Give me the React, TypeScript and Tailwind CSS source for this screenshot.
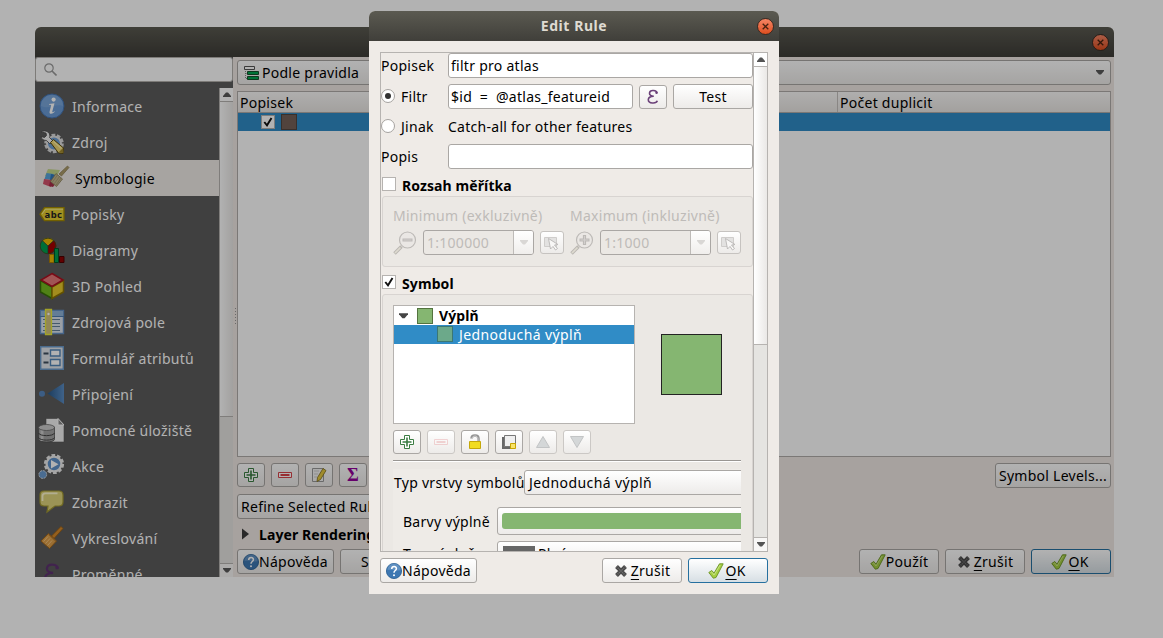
import type { ReactNode } from "react";
import clsx from "clsx";

type IconProps = { className?: string };

function InfoIcon() {
    return (
        <svg width="26" height="26" viewBox="0 0 26 26">
            <circle cx="13" cy="13" r="12" fill="#6a9bd6" stroke="#4574b0" />
            <path d="M2 13a11 11 0 0 1 22 0c-6-3-14 4-22 0z" fill="#8fb4e0" opacity=".45" />
            <circle cx="14.6" cy="6.6" r="2.1" fill="#fff" />
            <path d="M10 11l5.5-.8-2.2 8.3c-.2 1 .8.8 2-.3l.5.6c-2.2 2.5-6 2.9-5.2-.4l1.5-5.8c.2-.8-.6-.9-2.1-.8z" fill="#fff" />
        </svg>
    );
}

function ToolsIcon() {
    return (
        <svg width="26" height="26" viewBox="0 0 26 26">
            <circle cx="15" cy="14.500" r="8.2" fill="none" stroke="#d8d8d8" strokeWidth="3.2" strokeDasharray="3.6 1.55" />
            <circle cx="15" cy="14.500" r="7" fill="#6f9fd4" stroke="#e0e0e0" strokeWidth="2" />
            <path d="M2 3c2-1.500 5.500-1.500 7.500.5 1.500 1.500 1.600 3.500 1 5l3.500 3.500-3 3-3.500-3.500c-2.500 0-5-1-5.500-4l3.500 1 2-2-.5-2.500z" fill="#f4f4f4" stroke="#444" strokeWidth=".8" />
            <path d="M11.500 13.500l3-3 10 8.500-.5 5.500-4.500-.5z" fill="#efd774" stroke="#5a4a10" />
            <path d="M14.500 12.500l8 7" stroke="#fff2a8" strokeWidth="1.200" />
            <path d="M19.500 23.500l4.500-4.500.5 5z" fill="#a08830" />
        </svg>
    );
}

function SymbologyIcon() {
    return (
        <svg width="28" height="26" viewBox="0 0 28 26">
            <path d="M6 4l12 1-4 8-11-2z" fill="#c5d78c" />
            <path d="M4.500 8l7 1-2 6-7-1z" fill="#58a5dd" />
            <path d="M9 9l5 1-2 6-4-1z" fill="#3179be" />
            <path d="M2 14l8 1-1 7-8-3z" fill="#d3516a" />
            <path d="M8 16l6 2-3 4-4-1z" fill="#a92d48" />
            <path d="M25.500 1l1.500 1.500-7.500 8.500-2.500-2z" fill="#ad9c69" stroke="#8b7b50" strokeWidth=".7" />
            <path d="M14 8.500l6.500 5.500-6 7.500-6-5z" fill="#c3b78f" stroke="#8c8058" strokeWidth=".8" />
            <path d="M15.500 10l-5 7M17.500 11.500l-5 7M19 13l-5 7" stroke="#988c65" strokeWidth=".6" />
        </svg>
    );
}

function LabelsIcon() {
    return (
        <svg width="26" height="26" viewBox="0 0 26 26">
            <path d="M1 13.200l4.500-6.500H25v13H5.500z" fill="#e5cf31" stroke="#a58b00" strokeWidth="1.300" />
            <path d="M3 13l3.500-4.800H24" stroke="#f8ef95" fill="none" />
            <text x="5.500" y="16.500" fontSize="9.500" fontWeight="700" fontFamily="Noto Sans, sans-serif" letterSpacing="0" fill="#222" textLength="17.500">abc</text>
        </svg>
    );
}

function DiagramsIcon() {
    return (
        <svg width="26" height="26" viewBox="0 0 26 26">
            <circle cx="9" cy="9" r="7.800" fill="#00a050" />
            <path d="M9 9L3 3.500a8 8 0 0 1 12 0z" fill="#eebb00" />
            <path d="M9 9l6-5.500a8 8 0 0 1-6 13.500z" fill="#a50000" />
            <path d="M9 17V9L3.300 3.500M9 9l5.700-5.500" stroke="#333" strokeWidth=".7" fill="none" />
            <circle cx="9" cy="9" r="7.800" fill="none" stroke="#3a4a20" strokeWidth=".8" />
            <path d="M10.500 17.500h4.500v8h-4.500z" fill="#eebb00" stroke="#b07d00" />
            <path d="M15.500 11.500h4v14h-4z" fill="#00a050" stroke="#00552a" />
            <path d="M20.500 19.500h4.500v6h-4.500z" fill="#8d0000" stroke="#4d0000" />
        </svg>
    );
}

function CubeIcon() {
    return (
        <svg width="26" height="28" viewBox="0 0 26 28">
            <path d="M1.500 8.500L13 15v11.500L1.500 20z" fill="#73ba20" stroke="#38700a" strokeWidth="1.500" />
            <path d="M24.500 8.500L13 15v11.500L24.500 20z" fill="#e8c92c" stroke="#8e7400" strokeWidth="1.500" />
            <path d="M13 1.500L24 8l-11 6.500L2 8z" fill="#e67979" stroke="#ad1020" strokeWidth="1.500" />
        </svg>
    );
}

function FieldsIcon() {
    return (
        <svg width="26" height="28" viewBox="0 0 26 28">
            <path d="M1.500 2.500h23v23h-23z" fill="#dce4ee" stroke="#6490c4" strokeWidth="1.400" />
            <path d="M2 3h22v5H2z" fill="#8fb4d8" />
            <path d="M1 8.500h24" stroke="#4c7bb0" />
            <path d="M4 11.500h17M4 15.500h17M4 18.500h17M4 22.500h17" stroke="#64809c" />
            <path d="M6.500 1.500h6v25h-6z" fill="#d2c27b" stroke="#eaea3a" strokeWidth="1.300" />
            <circle cx="9.500" cy="6" r="1.200" fill="#fff" />
        </svg>
    );
}

function FormIcon() {
    return (
        <svg width="26" height="26" viewBox="0 0 26 26">
            <path d="M1.700 1.700h22.600v22.600H1.700z" fill="#e2e7ec" stroke="#6b9aca" strokeWidth="1.400" />
            <path d="M11.500 5h9.500v6h-9.500zM11.500 14.500h9.500v6h-9.500z" fill="#fff" stroke="#5486b8" strokeWidth="1.400" />
            <path d="M4.500 8.500h5M4.500 17.500h5" stroke="#3f4f5f" strokeWidth="2" />
        </svg>
    );
}

function JoinIcon() {
    return (
        <svg width="26" height="26" viewBox="0 0 26 26">
            <defs>
                <linearGradient id="join">
                    <stop stopColor="#285888" />
                    <stop offset="1" stopColor="#5b8dc4" />
                </linearGradient>
            </defs>
            <circle cx="3" cy="12.700" r="3" fill="#5786bd" />
            <path d="M8.500 12.500L25 2v21z" fill="url(#join)" />
        </svg>
    );
}

function StorageIcon() {
    return (
        <svg width="27" height="27" viewBox="0 0 27 27">
            <path d="M8 1.500h12l6 6V25H8z" fill="#f2f2f2" stroke="#555" strokeWidth=".6" />
            <path d="M20 1.500V8h6z" fill="#888" stroke="#fff" />
            <ellipse cx="8.500" cy="22.500" rx="8" ry="3" fill="#555" />
            <path d="M.5 10v12c0 4 16 4 16 0V10z" fill="#a2a2a2" stroke="#555" strokeWidth=".8" />
            <path d="M4 12v12" stroke="#ccc" strokeWidth="3" />
            <path d="M.5 16c1 3.500 15 3.500 16 0M.5 20.500c1 3.500 15 3.500 16 0" fill="none" stroke="#444" />
            <ellipse cx="8.500" cy="10.500" rx="8" ry="3" fill="#cacaca" stroke="#666" strokeWidth=".8" />
        </svg>
    );
}

function ActionsIcon() {
    return (
        <svg width="27" height="27" viewBox="0 0 27 27">
            <circle cx="16" cy="11" r="8.500" fill="none" stroke="#ededed" strokeWidth="3.200" strokeDasharray="3.500 1.840" />
            <circle cx="16" cy="11" r="7.400" fill="#5f91c9" stroke="#ededed" strokeWidth="2.300" />
            <path d="M13 7l7.500 4.200-7.500 4.200z" fill="#fff" />
            <circle cx="4.800" cy="21.500" r="3.900" fill="#6a9bd0" stroke="#ddd" strokeDasharray="2 1" />
        </svg>
    );
}

function DisplayIcon() {
    return (
        <svg width="26" height="26" viewBox="0 0 26 26">
            <path d="M5 2h15q4 0 4 4v7q0 4-4 4h-4l-8 6 1-6H5q-4 0-4-4V6q0-4 4-4z" fill="#ded47c" stroke="#a39932" strokeWidth="1.200" />
            <path d="M3.500 12V7q0-2.700 3-2.700h12" stroke="#fff9d0" fill="none" strokeWidth="1.800" />
        </svg>
    );
}

function RenderingIcon() {
    return (
        <svg width="26" height="26" viewBox="0 0 26 26">
            <path d="M22 1.500l2 2-9 10-2.500-2.500z" fill="#d5892c" stroke="#9b5c0b" strokeWidth=".8" />
            <path d="M9.500 8.500l8 7.500-7 7.500-8.500-7.500z" fill="#dfa04a" stroke="#a4661a" />
            <path d="M9 11.500l-4.500 5M11 13.500l-4.500 5M13 15.500l-4.500 5" stroke="#f6c581" />
            <path d="M9.500 9.500l7.500 7" stroke="#b87a2c" />
        </svg>
    );
}

function EpsilonIcon({ className }: IconProps) {
    return (
        <svg className={className} width="16" height="18" viewBox="0 0 16 18">
            <path
                d="M12 5.200C11.800 2 5 1.200 4.500 5c-.2 2 1.700 3.200 4.300 3.200C5 8.200 3.300 9.800 3.300 11.700c0 4.100 8 4.200 9 1.100"
                fill="none"
                stroke="currentColor"
                strokeWidth="1.600"
            />
            <circle cx="11.500" cy="4.700" r="1.200" fill="currentColor" />
        </svg>
    );
}

function PlusIcon() {
    return (
        <svg width="16" height="16" viewBox="0 0 16 16">
            <path d="M5.500 1.500h5v4h4v5h-4v4h-5v-4h-4v-5h4z" fill="#fff" stroke="#3b7d43" />
            <path d="M8 3.500v9M3.500 8h9" stroke="#3b7d43" strokeWidth="1.600" />
        </svg>
    );
}

function MinusIcon() {
    return (
        <svg width="16" height="16" viewBox="0 0 16 16">
            <path d="M1.500 5.500h13v5h-13z" fill="#fff" stroke="#d8444a" />
            <path d="M3.500 8h9" stroke="#d8444a" strokeWidth="2" />
        </svg>
    );
}

function EditIcon() {
    return (
        <svg width="16" height="16" viewBox="0 0 16 16">
            <path d="M1.500 1.500h11v13h-11z" fill="#f4f4f4" stroke="#999" />
            <path d="M3 4h5M3 7h4M3 10h3" stroke="#ccc" />
            <path d="M6.500 10.500L12 1.500l3 2-5.500 9-3.500 2z" fill="#e4c83e" stroke="#7d6b1c" strokeWidth=".8" />
        </svg>
    );
}

function LockIcon() {
    return (
        <svg width="16" height="16" viewBox="0 0 16 16">
            <path d="M4.500 4.500C4.500.5 11.500.5 11.500 4.500v3" fill="none" stroke="#929292" strokeWidth="2.500" />
            <path d="M5 4.200C5.500 1.500 10.500 1 11 4.500v3" fill="none" stroke="#ddd" strokeWidth=".8" />
            <path d="M2.500 7.500h11v7h-11z" fill="#f2dc20" stroke="#c5a80a" />
        </svg>
    );
}

function DuplicateIcon() {
    return (
        <svg width="16" height="16" viewBox="0 0 16 16">
            <path d="M1 3h11v12H1z" fill="#686868" />
            <path d="M3.500 1.500h11v11h-11z" fill="#efefef" stroke="#777" />
            <path d="M9.500 9.500h5v5h-5z" fill="#f8e36a" stroke="#c8a400" />
        </svg>
    );
}

function TriangleIcon({ down }: { down?: boolean }) {
    return (
        <svg width="16" height="16" viewBox="0 0 16 16" className={clsx(down && "rotate-180")}>
            <path d="M8 2.500l6.500 11h-13z" fill="#d4d7d8" stroke="#c2c4c5" />
        </svg>
    );
}

function ZoomIcon({ plus }: { plus?: boolean }) {
    return (
        <svg width="24" height="24" viewBox="0 0 24 24" className="shrink-0">
            <path d="M1.500 22.500l7-7" stroke="#bab7b2" strokeWidth="3.500" />
            <path d="M2 22l5.500-5.500" stroke="#dedbd0" strokeWidth="1.700" />
            <circle cx="14.500" cy="9" r="8" fill="#eae7e4" stroke="#bdbab7" strokeWidth="1.200" />
            <path d={plus ? "M9.500 9h10M14.500 4v10" : "M9.500 9h10"} stroke="#bdbab7" strokeWidth="3.200" />
            <path d={plus ? "M10.500 9h8M14.500 5v8" : "M10.500 9h8"} stroke="#d3d0ce" strokeWidth="1" />
        </svg>
    );
}

function CanvasIcon() {
    return (
        <svg width="16" height="16" viewBox="0 0 16 16">
            <path d="M.5 2.500h12v9H.5z" fill="#e3e2e1" stroke="#cfcdcb" />
            <path d="M4.500 3.500l9.500 6-3.500.5 3 3.500-2 1.500-2.500-3.500-2.500 2.500z" fill="#f8f7f6" stroke="#b8b6b4" strokeWidth=".9" />
        </svg>
    );
}

function HelpIcon() {
    return (
        <svg width="16" height="16" viewBox="0 0 16 16" className="shrink-0">
            <circle cx="8" cy="8" r="7.600" fill="#3d77b2" stroke="#255a91" strokeWidth=".8" />
            <path d="M1.500 7a6.500 6.500 0 0 1 13 0c-4 1.500-8-1-13 0z" fill="#77a1cd" opacity=".6" />
            <path d="M5.700 6c.1-3.300 4.900-3.200 4.700-.3C10.300 7.600 8 7.500 8 9.800" fill="none" stroke="#fff" strokeWidth="1.500" />
            <circle cx="8" cy="12.300" r="1" fill="#fff" />
        </svg>
    );
}

function CheckIcon() {
    return (
        <svg width="16" height="16" viewBox="0 0 16 16" className="shrink-0">
            <path d="M.8 9.500l3-2 2.200 2.700L11.500.8h3.700L8 14.500l-2.700.7z" fill="#a5ce43" stroke="#6b9324" strokeWidth=".9" />
            <path d="M2.500 9.600l1.200-.7L6 12 12.200 2" fill="none" stroke="#d0e897" strokeWidth=".8" />
        </svg>
    );
}

function CrossIcon() {
    return (
        <svg width="14" height="14" viewBox="0 0 14 14" className="shrink-0">
            <path d="M2.500 2.500l9 9M11.500 2.500l-9 9" stroke="#494949" strokeWidth="4" />
            <path d="M2.500 2.500l9 9M11.500 2.500l-9 9" stroke="#727272" strokeWidth="1.500" strokeDasharray="1 1" />
        </svg>
    );
}

function RulesIcon() {
    return (
        <svg width="16" height="16" viewBox="0 0 16 16" className="shrink-0">
            <path d="M1.500 4v9.500h3M1.500 8.500h3" stroke="#888" fill="none" strokeDasharray="1 1" />
            <path d="M.5 1.500h10v3H.5z" fill="#fff" stroke="#555" />
            <path d="M3.500 6.500h11v3h-11zM3.500 11.500h11v3h-11z" fill="#00a550" stroke="#174f2c" />
        </svg>
    );
}

function Arrow({ className }: IconProps) {
    return (
        <svg width="8" height="5" viewBox="0 0 8 5" className={clsx("shrink-0", className)}>
            <path d="M0 0h8v1L5 4.500H3L0 1z" fill="currentColor" />
        </svg>
    );
}

function Tick({ checked }: { checked?: boolean }) {
    return (
        <span className="flex size-3.5 shrink-0 items-center justify-center border border-[#b6b3b0] bg-white">
            {checked && (
                <svg width="10" height="10" viewBox="0 0 10 10">
                    <path d="M1.300 5L4 8.300 8.500 1" fill="none" stroke="#111" strokeWidth="1.900" />
                </svg>
            )}
        </span>
    );
}

function Radio({ checked }: { checked?: boolean }) {
    return (
        <span className="mb-0.5 flex size-3.5 shrink-0 items-center justify-center rounded-full border border-[#a5a29f] bg-white">
            {checked && <span className="size-1.5 rounded-full bg-[#333]" />}
        </span>
    );
}

function Button({ className, children }: { className?: string; children?: ReactNode }) {
    return (
        <div
            className={clsx(
                "flex shrink-0 items-center justify-center rounded-[3px] border bg-linear-to-b from-white to-[#edebe9] whitespace-nowrap",
                className,
            )}
        >
            {children}
        </div>
    );
}

function ToolButton({ disabled, children }: { disabled?: boolean; children: ReactNode }) {
    return (
        <Button className={clsx("h-6 w-7", disabled ? "border-[#cbc8c5]" : "border-[#aaa7a4]")}>{children}</Button>
    );
}

function CloseButton() {
    return (
        <div className="flex size-[17px] items-center justify-center rounded-full border border-[#3a2a22] bg-linear-to-b from-[#f58563] to-[#dd4d1b]">
            <svg width="7" height="7" viewBox="0 0 7 7">
                <path d="M.7.7l5.600 5.600M6.300.7L.7 6.300" stroke="#46210f" strokeWidth="1.300" />
            </svg>
        </div>
    );
}

const NAV = [
    { label: "Informace", icon: <InfoIcon /> },
    { label: "Zdroj", icon: <ToolsIcon /> },
    { label: "Symbologie", icon: <SymbologyIcon /> },
    { label: "Popisky", icon: <LabelsIcon /> },
    { label: "Diagramy", icon: <DiagramsIcon /> },
    { label: "3D Pohled", icon: <CubeIcon /> },
    { label: "Zdrojová pole", icon: <FieldsIcon /> },
    { label: "Formulář atributů", icon: <FormIcon /> },
    { label: "Připojení", icon: <JoinIcon /> },
    { label: "Pomocné úložiště", icon: <StorageIcon /> },
    { label: "Akce", icon: <ActionsIcon /> },
    { label: "Zobrazit", icon: <DisplayIcon /> },
    { label: "Vykreslování", icon: <RenderingIcon /> },
    { label: "Proměnné", icon: <EpsilonIcon className="h-[26px] w-[24px] text-[#5e3370]" /> },
];

function Sidebar() {
    return (
        <div className="flex w-[198px] shrink-0 flex-col bg-[#5c5c5c]">
            <div className="flex h-[25px] shrink-0 items-center rounded-[3px] border border-[#b3b0ad] bg-white pl-2">
                <svg width="13" height="13" viewBox="0 0 13 13">
                    <circle cx="5" cy="5" r="4.200" fill="none" stroke="#9a9a9a" strokeWidth="1.200" />
                    <path d="M8 8l4.500 4.500" stroke="#9a9a9a" strokeWidth="1.600" />
                </svg>
            </div>
            <div className="mt-1.5 flex min-h-0 flex-1">
                <div className="w-[184px] overflow-hidden">
                    {NAV.map((item) => {
                        const active = item.label === "Symbologie";
                        return (
                            <div
                                key={item.label}
                                className={clsx(
                                    "flex h-9 items-center pl-[3px] whitespace-nowrap",
                                    active ? "bg-[#efebe7] text-black" : "text-white",
                                )}
                            >
                                <span className={clsx("flex shrink-0 justify-center", active ? "w-[35px]" : "w-[27px]")}>
                                    {item.icon}
                                </span>
                                <span className={clsx("pt-0.5", active ? "ml-0.5" : "ml-[7px]")}>{item.label}</span>
                            </div>
                        );
                    })}
                </div>
                <div className="flex w-3.5 flex-col border-l border-[#b6b3b0] bg-[#e5e4e1]">
                    <div className="flex h-3.5 items-center justify-center border-b border-[#b6b3b0] bg-white text-[#5a5a5a]">
                        <Arrow className="rotate-180" />
                    </div>
                    <div className="h-[315px] border-b border-[#b6b3b0] bg-linear-to-r from-white to-[#e9e7e5]" />
                    <div className="mt-auto flex h-3.5 items-center justify-center border-t border-[#b6b3b0] bg-[#f6f5f4] text-[#5a5a5a]">
                        <Arrow />
                    </div>
                </div>
            </div>
        </div>
    );
}

function PropertiesWindow() {
    return (
        <div className="flex h-[550px] w-[1079px] flex-col overflow-hidden rounded-t-md bg-[#efe9e4]">
            <div className="flex h-[30px] shrink-0 items-center justify-end bg-linear-to-b from-[#5b5a51] to-[#3e3d38] pr-[5px]">
                <CloseButton />
            </div>
            <div className="flex min-h-0 flex-1">
                <Sidebar />
                <div className="flex w-1 shrink-0 flex-col items-end justify-center gap-[2px] pb-0.5">
                    {[0, 1, 2, 3, 4, 5].map((dot) => (
                        <span key={dot} className="mr-px size-px bg-[#999]" />
                    ))}
                </div>
                <div className="flex min-w-0 flex-1 flex-col pt-[3px] pr-[3px] pb-[3px]">
                    <Button className="h-[25px] w-full justify-start! border-[#aaa7a4] px-1.5">
                        <RulesIcon />
                        <span className="ml-0.5 flex-1">Podle pravidla</span>
                        <Arrow className="text-[#5a5a5a]" />
                    </Button>
                    <div className="mt-1.5 h-[366px] border border-[#b0adaa] bg-white">
                        <div className="flex h-[21px] items-center border-b border-[#b0adaa] bg-linear-to-b from-[#fbfaf9] to-[#e9e6e3]">
                            <div className="h-full w-[600px] border-r border-[#c4c1be] pt-px pl-0.5">Popisek</div>
                            <div className="pt-px pl-0.5">Počet duplicit</div>
                        </div>
                        <div className="flex h-[18px] items-center gap-1.5 bg-[#308cc6] pl-[23px]">
                            <Tick checked />
                            <span className="size-4 border border-[#514640] bg-[#746158]" />
                        </div>
                    </div>
                    <div className="mt-1.5 flex h-[25px] gap-1.5">
                        <ToolButton>
                            <PlusIcon />
                        </ToolButton>
                        <ToolButton>
                            <MinusIcon />
                        </ToolButton>
                        <ToolButton>
                            <EditIcon />
                        </ToolButton>
                        <ToolButton>
                            <span className="font-['Liberation_Serif',serif] text-[18px] font-bold text-[#92009a]">Σ</span>
                        </ToolButton>
                        <Button className="ml-auto w-[116px] border-[#aaa7a4]">Symbol Levels...</Button>
                    </div>
                    <Button className="mt-1.5 h-[25px] w-[180px] justify-start! border-[#aaa7a4] pl-[3px]">
                        Refine Selected Rules
                    </Button>
                    <div className="flex h-[30px] items-center pl-1">
                        <svg width="9" height="12" viewBox="0 0 9 12">
                            <path d="M1 .5v11l7-5.500z" fill="#3c3c3c" />
                        </svg>
                        <span className="ml-[9px] pt-0.5 font-bold tracking-[0.1px]">Layer Rendering</span>
                    </div>
                    <div className="flex h-[25px] gap-1.5">
                        <Button className="w-[97px] border-[#aaa7a4]">
                            <HelpIcon />
                            <span>Nápověda</span>
                        </Button>
                        <Button className="w-[97px] justify-start! border-[#aaa7a4] pl-5">Styl</Button>
                        <Button className="ml-auto w-20 border-[#aaa7a4]">
                            <CheckIcon />
                            <span>Použít</span>
                        </Button>
                        <CancelButton />
                        <OkButton />
                    </div>
                </div>
            </div>
        </div>
    );
}

function CancelButton() {
    return (
        <Button className="h-[25px] w-20 gap-[3px] border-[#aaa7a4]">
            <CrossIcon />
            <span>
                <span className="underline underline-offset-[3px]">Z</span>rušit
            </span>
        </Button>
    );
}

function OkButton() {
    return (
        <Button className="h-[25px] w-20 gap-px border-[#26709f] to-[#d7dfe4]! pr-0.5">
            <CheckIcon />
            <span>
                <span className="underline underline-offset-[3px]">O</span>K
            </span>
        </Button>
    );
}

function Field({ className, children }: { className?: string; children?: ReactNode }) {
    return (
        <div
            className={clsx(
                "flex h-[25px] items-center rounded-[3px] border border-[#aaa7a4] bg-white pl-0.5 whitespace-pre",
                className,
            )}
        >
            {children}
        </div>
    );
}

function ScaleInput({ label, value, plus }: { label: string; value: string; plus?: boolean }) {
    return (
        <div className="w-[177px] text-[#bebbb8]">
            <div className="flex h-5 items-center whitespace-nowrap">{label}</div>
            <div className="mt-1 flex h-[25px] items-center">
                <ZoomIcon plus={plus} />
                <div className="ml-1.5 flex h-[25px] w-[111px] overflow-hidden rounded-[3px] border border-[#aaa7a4]">
                    <div className="flex flex-1 items-center pl-[3px]">{value}</div>
                    <div className="flex w-5 items-center justify-center border-l border-[#bebbb8] bg-linear-to-b from-white to-[#f0eeec]">
                        <Arrow className="text-[#d9d7d5]" />
                    </div>
                </div>
                <Button className="ml-1.5 h-[23px] w-6 border-[#c6c3c0]">
                    <CanvasIcon />
                </Button>
            </div>
        </div>
    );
}

function RuleForm() {
    return (
        <div className="h-full w-[372px] shrink-0 overflow-hidden">
            <div className="flex h-[25px] items-center">
                <span className="w-[67px] shrink-0">Popisek</span>
                <Field className="flex-1">filtr pro atlas</Field>
            </div>
            <div className="mt-1.5 flex h-[25px] items-center">
                <div className="flex w-[67px] shrink-0 items-center gap-1.5">
                    <Radio checked />
                    Filtr
                </div>
                <Field className="w-[185px]">{"$id  =  @atlas_featureid"}</Field>
                <Button className="ml-1.5 h-6 w-7 border-[#aaa7a4]">
                    <EpsilonIcon className="text-[#6b4179]" />
                </Button>
                <Button className="ml-1.5 h-[25px] w-20 border-[#aaa7a4]">Test</Button>
            </div>
            <div className="flex h-[35px] items-center">
                <div className="flex w-[67px] shrink-0 items-center gap-1.5">
                    <Radio />
                    Jinak
                </div>
                <span>Catch-all for other features</span>
            </div>
            <div className="flex h-[25px] items-center">
                <span className="w-[67px] shrink-0">Popis</span>
                <Field className="flex-1" />
            </div>
            <div className="flex h-[27px] items-end gap-1.5 pl-px font-bold tracking-[0.1px]">
                <span className="pb-[5px]">
                    <Tick />
                </span>
                <span className="leading-5">Rozsah měřítka</span>
            </div>
            <div className="ml-px flex h-[71px] rounded-[3px] border border-[#d8d4d1] bg-[#ebe8e4] pt-[9px] pl-2.5">
                <ScaleInput label="Minimum (exkluzivně)" value="1:100000" />
                <ScaleInput label="Maximum (inkluzivně)" value="1:1000" plus />
            </div>
            <div className="flex h-[27px] items-end gap-1.5 pl-px font-bold tracking-[0.1px]">
                <span className="pb-[5px]">
                    <Tick checked />
                </span>
                <span className="leading-5">Symbol</span>
            </div>
            <div className="ml-px h-[300px] rounded-[3px] border border-[#d8d4d1] bg-[#ebe8e4] pt-2.5 pl-2.5">
                <div className="flex">
                    <div className="h-[119px] w-[242px] border border-[#b6b3b0] bg-white">
                        <div className="flex h-[19px] items-center pl-[5px] font-bold tracking-[0.1px]">
                            <Arrow className="h-[6px] w-[9px] text-[#444]" />
                            <span className="ml-[9px] size-4 border border-[#54733f] bg-[#85b671]" />
                            <span className="ml-1.5">Výplň</span>
                        </div>
                        <div className="flex h-[19px] items-center bg-[#308cc6] pl-[43px] tracking-[0.4px] text-white">
                            <span className="mb-px size-4 border border-[#3b7773] bg-[#6ca98a]" />
                            <span className="ml-1.5">Jednoduchá výplň</span>
                        </div>
                    </div>
                    <div className="mt-[29px] ml-[26px] size-[61px] border border-[#232323] bg-[#85b671]" />
                </div>
                <div className="mt-1.5 flex gap-1.5">
                    <ToolButton>
                        <PlusIcon />
                    </ToolButton>
                    <ToolButton disabled>
                        <span className="opacity-20">
                            <MinusIcon />
                        </span>
                    </ToolButton>
                    <ToolButton>
                        <LockIcon />
                    </ToolButton>
                    <ToolButton>
                        <DuplicateIcon />
                    </ToolButton>
                    <ToolButton disabled>
                        <TriangleIcon />
                    </ToolButton>
                    <ToolButton disabled>
                        <TriangleIcon down />
                    </ToolButton>
                </div>
                <div className="mt-1.5 h-0.5 w-[348px] border-t border-[#999693] bg-white" />
                <div className="mt-[7px] h-[90px] w-[348px] overflow-hidden bg-[#eeebe7] pt-px whitespace-nowrap">
                    <div className="flex h-[25px] items-center">
                        <span className="w-[131px] shrink-0 pl-px">Typ vrstvy symbolů</span>
                        <Button className="h-[25px] w-[230px] justify-start! border-[#aaa7a4] pl-1 tracking-[0.4px]">
                            Jednoduchá výplň
                        </Button>
                    </div>
                    <div className="mt-3 flex h-7 items-center">
                        <span className="w-[104px] shrink-0 pt-0.5 pl-2.5">Barvy výplně</span>
                        <Button className="h-7 w-[260px] justify-start! border-[#aaa7a4] pl-1">
                            <span className="h-4 w-[250px] rounded-[3px] bg-[#85b671]" />
                        </Button>
                    </div>
                    <div className="mt-1.5 flex h-[25px] items-center">
                        <span className="w-[104px] shrink-0 pl-2.5">Typ výplně</span>
                        <Button className="h-[25px] w-[260px] justify-start! border-[#aaa7a4] pl-[5px]">
                            <span className="h-4 w-8 bg-[#666]" />
                            <span className="ml-[3px]">Plná</span>
                        </Button>
                    </div>
                </div>
            </div>
        </div>
    );
}

function EditRuleDialog() {
    return (
        <div className="absolute top-[11px] left-[369px] h-[583px] w-[410px] overflow-hidden rounded-t-md bg-[#efebe7]">
            <div className="flex h-[30px] items-center bg-linear-to-b from-[#5b5a51] to-[#403f3a] pr-[5px]">
                <span className="flex-1 pl-[22px] text-center font-bold tracking-[0.55px] text-[#dfdbd2]">Edit Rule</span>
                <CloseButton />
            </div>
            <div className="mx-[11px] mt-[11px] flex h-[500px] border border-[#b6b3b0]">
                <RuleForm />
                <div className="flex w-3.5 shrink-0 flex-col border-l border-[#b6b3b0] bg-[#e5e4e1]">
                    <div className="flex h-3.5 shrink-0 items-center justify-center border-b border-[#b6b3b0] bg-white text-[#555]">
                        <Arrow className="rotate-180" />
                    </div>
                    <div className="h-[278px] border-b border-[#b6b3b0] bg-linear-to-r from-white to-[#eae8e6]" />
                    <div className="mt-auto flex h-3.5 items-center justify-center border-t border-[#b6b3b0] bg-[#f8f7f6] text-[#555]">
                        <Arrow />
                    </div>
                </div>
            </div>
            <div className="mx-[11px] mt-1.5 flex gap-1.5">
                <Button className="mr-auto h-[25px] w-[97px] border-[#aaa7a4]">
                    <HelpIcon />
                    <span>Nápověda</span>
                </Button>
                <CancelButton />
                <OkButton />
            </div>
        </div>
    );
}

export default function App() {
    return (
        <div className="relative h-[638px] w-[1163px] overflow-hidden bg-white pt-[27px] pl-[35px] font-['Noto_Sans',sans-serif] text-[14px] leading-5 tracking-[0.27px] text-black">
            <PropertiesWindow />
            <div className="absolute inset-0 bg-black/30" />
            <EditRuleDialog />
        </div>
    );
}
